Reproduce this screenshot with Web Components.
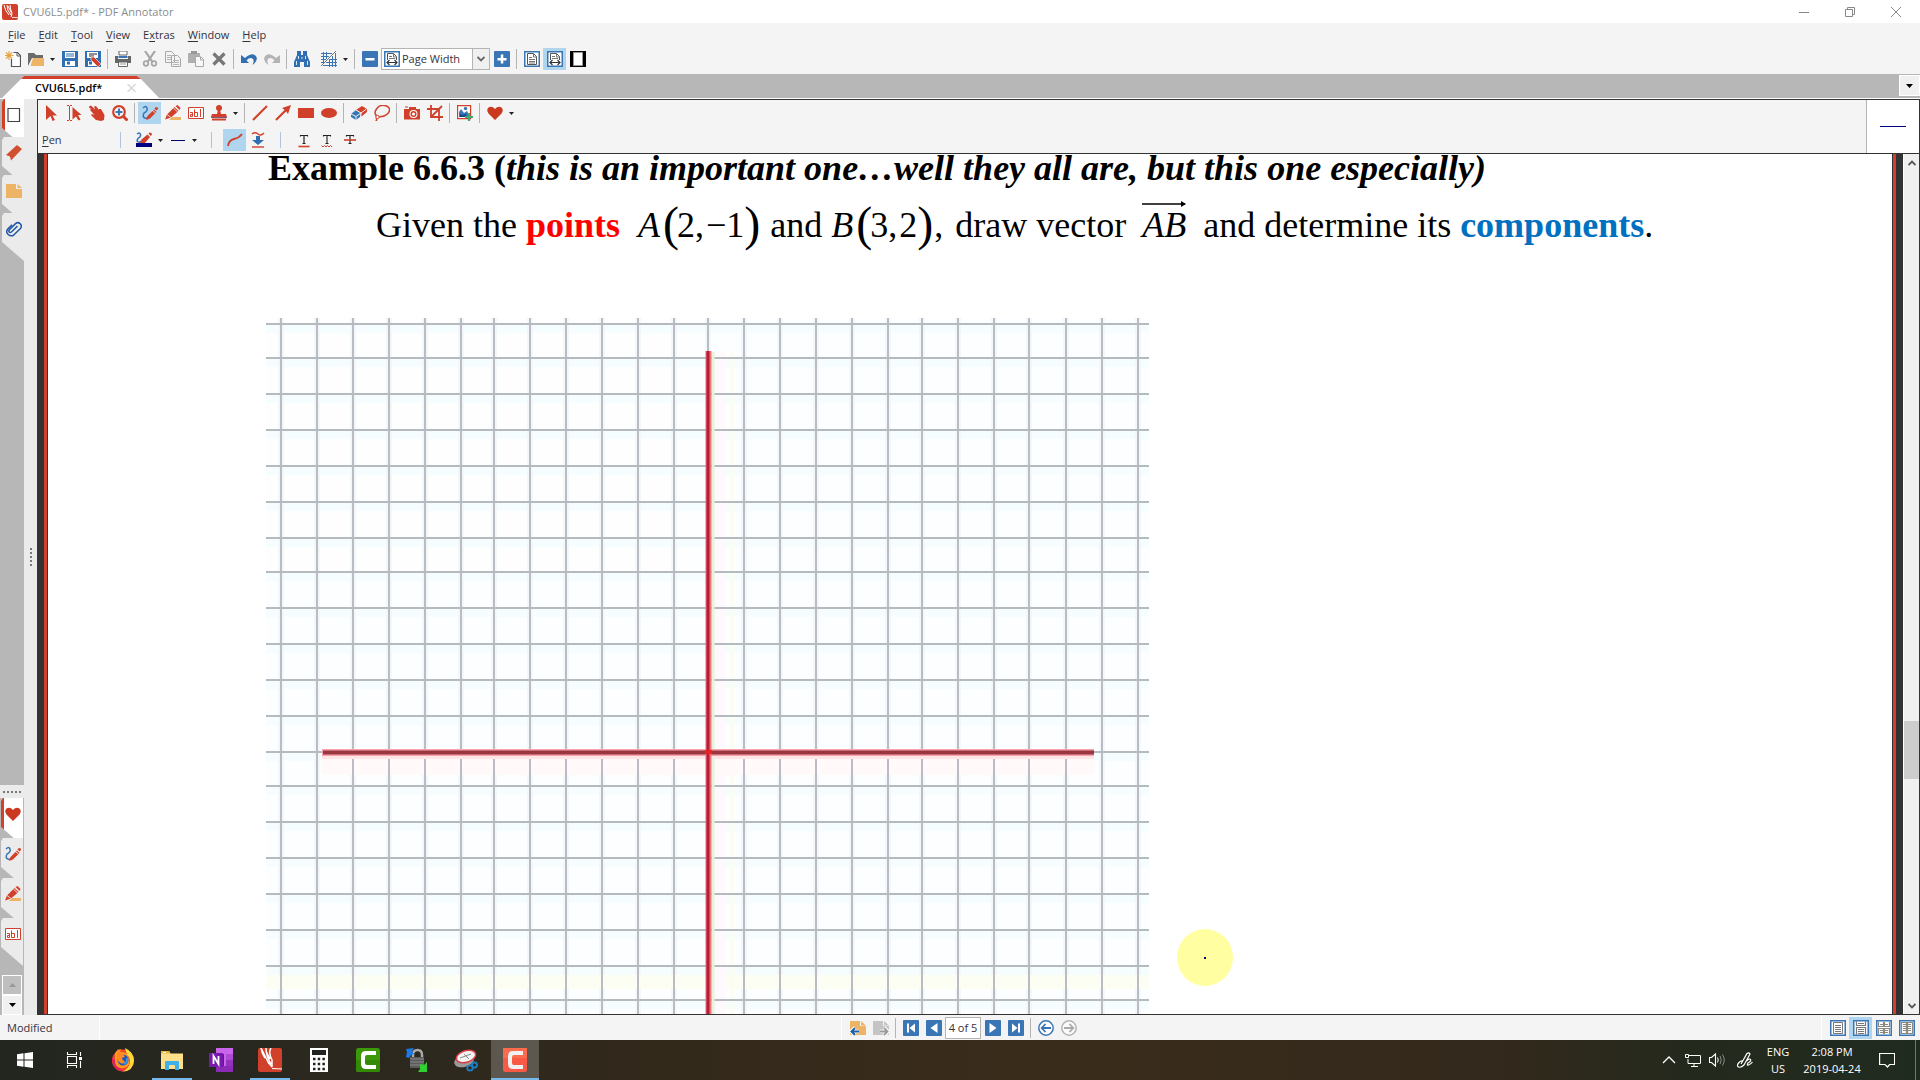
<!DOCTYPE html>
<html lang="en">
<head>
<meta charset="utf-8">
<title>CVU6L5.pdf* - PDF Annotator</title>
<style>
  html, body { margin: 0; height: 100%; }
  body {
    font: 11px/16px "Open Sans", "Noto Sans", sans-serif;
    color: #333340;
    overflow: hidden;
    --red: #d0402b;
    --blue: #3a76b6;
    --panel: #f4f4f4;
    --strip: #b7b7b7;
    --light: #ebebeb;
    --dark: #333333;
    --hot: #b0d5ef;
  }
</style>
</head>
<body>
<annotator-app></annotator-app>

<script>
const PEN = '<path d="M1 3q3-3 4 0t-3 5q-2 4 1 5 2 1 3-1" fill="none" stroke="#3a76b6" stroke-width="1.5"/><path d="M4 15l1.500-4L12 4.500l2.500 2.500L8 13.500z" fill="#d0402b"/><path d="M12.500 3.500l1.300-1.500 2 .500.200 1.500-1.500 1.500z" fill="#d0402b"/><path d="M10.500 5.500l3 2.500" stroke="#fff" stroke-width=".8"/>';
const PAGE = '<path d="M.75.75h14.500v14.500H.75z" fill="#fff" stroke="#3a76b6" stroke-width="1.500"/>';
const ICONS = {
  logo: '<rect width="16" height="16" rx="2" fill="#d0402b"/><path d="M2 1q1 6 5 10M5 1q0 6 4 10M6 2q2 4 4 8l-1 3M8 1q0 4 2 8" fill="none" stroke="#fff" stroke-width="1"/><path d="M10 13.500h6" stroke="#fff" stroke-width=".8"/>',
  newdoc: '<path d="M8.500 1.500h4l3 3v11h-9V8" fill="#fff" stroke="#555" stroke-width="1.200"/><path d="M12 1.500V5h3.500" fill="none" stroke="#555"/><path d="M4 0v9M0 4.500h8.500M1 1.500l6 6M7 1.500l-6 6" stroke="#e8a33c" stroke-width="1.100"/>',
  open: '<path d="M0 15V2h6l2 2h7v3H4z" fill="#6b6b6b"/><path d="M2.500 15L5 7h11v8z" fill="#ecb464"/>',
  save: '<path d="M0 0h16v16H0z" fill="#2f6fb2"/><path d="M3 1h10v6H3zM3 10h10v5H3z" fill="#fff"/><path d="M4 3h8M4 5h8" stroke="#2f6fb2"/><path d="M5 10.500h3v3H5z" fill="#2f6fb2"/>',
  saveas: '<path d="M0 0h16v16H0z" fill="#2f6fb2"/><path d="M2 1h11v6H2zM3 10h9v5H3z" fill="#fff"/><path d="M4 3h8M4 5h5" stroke="#222"/><path d="M4 10.500h3v3H4z" fill="#2f6fb2"/><path d="M6 6l3 0 7 7-3 3-7-7z" fill="#d0402b" stroke="#fff" stroke-width=".6"/>',
  print: '<path d="M4 0h8v4H4z" fill="#fff" stroke="#666"/><path d="M3.500 5h9v2h-9z" fill="#3a76b6"/><path d="M0 5h3v3h10V5h3v7H0z" fill="#666"/><path d="M3.500 11h9v4.500h-9z" fill="#fff" stroke="#666"/><path d="M5 13h6" stroke="#999"/>',
  cut: '<path d="M3 0l7.500 11M13 0L5.500 11" stroke="#a6a6a6" stroke-width="2.200"/><circle cx="4" cy="12.500" r="2.300" fill="none" stroke="#a6a6a6" stroke-width="1.700"/><circle cx="12" cy="12.500" r="2.300" fill="none" stroke="#a6a6a6" stroke-width="1.700"/>',
  copy: '<path d="M.5.5h6l3 3v8h-9zM6.500 4.500h6l3 3v8h-9z" fill="#f4f4f4" stroke="#a8a8a8"/><path d="M2 4.500h4M2 6.500h4M2 8.500h4M8 9.500h6M8 11.500h6M8 13.500h6" stroke="#b4b4b4"/>',
  paste: '<path d="M0 2h12v10H0z" fill="#b0b0b0"/><path d="M3 0h6v3H3z" fill="#999"/><path d="M7.500 5.500h5l3 3v7h-8z" fill="#f8f8f8" stroke="#a8a8a8"/><path d="M12.500 6v3h3" fill="none" stroke="#a8a8a8"/>',
  del: '<path d="M2.500 2.500l11 11M13.500 2.500l-11 11" stroke="#777" stroke-width="3.200"/>',
  undo: '<path d="M0 4v8h8L5.500 9.500Q9 5.500 12 8q1.500 2-.5 6Q17 10 15.500 6 12 0 4 7z" fill="#2f6fb2"/>',
  redo: '<path d="M16 4v8H8l2.500-2.500Q7 5.500 4 8q-1.500 2 .5 6Q-1 10 .5 6 4 0 12 7z" fill="#b4b4b4"/>',
  find: '<path d="M3 0h4v4h2V0h4v4l3 7v5h-6v-5H6v5H0v-5l3-7z" fill="#2f6fb2"/><path d="M4.500 5v3M2.500 10v4M11.500 5v3M13.500 10v4M8 6v2" stroke="#d6e6f5"/>',
  grid: '<path d="M0 2.500h11M0 5.500h8M0 8.500h5M8 8.500h8M0 11.500h3M5 11.500h11M2 14.500h14M2.500 1v10M5.500 1v7M8.500 8v8M11.500 5v11M14.500 2v14" stroke="#3a76b6" stroke-width="1"/><path d="M0 15L15 0" stroke="#777" stroke-width="1"/>',
  minus: '<rect width="16" height="16" rx="1" fill="#3a76b6"/><path d="M3.500 7h9v2.500h-9z" fill="#fff"/>',
  plus: '<rect width="16" height="16" rx="1" fill="#3a76b6"/><path d="M3.500 7h9v2.500h-9zM6.800 3.500h2.500v9H6.800z" fill="#fff"/>',
  pagefull: PAGE + '<path d="M3.500 2.500h6l3 3v8h-9z" fill="none" stroke="#555"/><path d="M9.500 3v3h3M5 6.500h3M5 8.500h6M5 10.500h6M5 12h6" stroke="#777" fill="none"/>',
  pagewidth: PAGE + '<path d="M3.500 9V2.500h6l3 3V9" fill="none" stroke="#555"/><path d="M5 5.500h3M5 7.500h6M9.500 3v3h3" stroke="#777" fill="none"/><path d="M3 11.500h10M5.500 9L3 11.500 5.500 14M10.500 9l2.500 2.500-2.500 2.500" fill="none" stroke="#333" stroke-width="1.200"/>',
  fullscreen: '<path d="M0 0h16v16H0z"/><path d="M3.500 1.500h9v13h-9z" fill="#fff" stroke="#999"/>',
  arrow: '<path d="M3 0l11 10.500H9.500l2.500 4.500-2.500 1L7.500 11 3 15z" fill="#d0402b"/>',
  textsel: '<path d="M1 .5h2M4 .5h2M3.500 1v14M1 15.500h2M4 15.500h2" stroke="#d0402b" stroke-width="1"/><path d="M6.500 2l9 8h-3.500l2.500 4.500-2 1L10 11.500 6.500 14.500z" fill="#d0402b"/>',
  hand: '<path d="M0 1.500l2-1 4 4-1-3 2-.5 3 4V4l2 0 3.500 6-.5 5-3 1-5-1-5-5 1-1 2.500 1L1 5l1-1-2-1.500z" fill="#d0402b"/>',
  zoom: '<circle cx="7" cy="7" r="5.800" fill="#fff" stroke="#d0402b" stroke-width="2.200"/><path d="M11 11l4.500 4.500" stroke="#d0402b" stroke-width="3"/><path d="M3.500 7h7M7 3.500v7" stroke="#3a76b6" stroke-width="2.200"/>',
  pen: PEN,
  marker: '<path d="M7 12h9v3H4z" fill="#ecb464"/><path d="M0 14.500l2-5L9.500 2l4 4L6 12.500z" fill="#d0402b"/><path d="M10.500 1l2-1 3 3-1 2z" fill="#d0402b"/><path d="M2 9.500l4 3M8.500 3l4 4" stroke="#fff" stroke-width=".8"/>',
  textbox: '<path d="M.5 2.500h15v11H.5z" fill="#fff" stroke="#d0402b"/><path d="M12.500 4v8M6.500 4.500v7M6.500 7.500h3v4h-3M2 7.500h2.500v4H2.500v-2h2" fill="none" stroke="#d0402b"/>',
  stamp: '<circle cx="8" cy="3" r="3" fill="#d0402b"/><path d="M7 5h2l1 4h5l1 3H0l1-3h5z" fill="#d0402b"/><path d="M0 12.500h16" stroke="#7e5a7a"/><path d="M1 14.500h14" stroke="#d0402b" stroke-width="2"/>',
  line: '<path d="M1 15L15 1" stroke="#d0402b" stroke-width="2"/>',
  arrowline: '<path d="M1 15L12 4" stroke="#d0402b" stroke-width="2.200"/><path d="M16 0l-3 9-2.500-3.500L7 3z" fill="#d0402b"/>',
  rect: '<path d="M0 3h16v10H0z" fill="#d0402b"/>',
  ellipse: '<ellipse cx="8" cy="8" rx="8" ry="5" fill="#d0402b"/>',
  eraser: '<path d="M0 9l5-4 5 3-1 4-4 3-5-3z" fill="#3a76b6"/><path d="M5 5l6-4 5 3v3l-6 5V8z" fill="#d0402b"/><path d="M0 9l5 2.500v4M5 11.500L15.500 4M5 5l5 3v4" stroke="#fff" fill="none" stroke-width=".9"/>',
  lasso: '<path d="M4 12Q-1 9 2.500 4T12 .8q5 2 3 6t-9 5q-4 0-3.500 2t-1 2.200" fill="none" stroke="#d0402b" stroke-width="1.500"/><circle cx="3.500" cy="12" r="1.700" fill="#fff" stroke="#d0402b"/>',
  camera: '<path d="M0 4h5V2h7v2h4v10.500H0z" fill="#d0402b"/><circle cx="9.500" cy="9" r="4" fill="#fff"/><circle cx="9.500" cy="9" r="2.300" fill="none" stroke="#d0402b" stroke-width="1.500"/><path d="M1 2h3" stroke="#d0402b"/>',
  crop: '<path d="M4 0v12h12M0 4h12v12M4.500 11.500L15 1" fill="none" stroke="#d0402b" stroke-width="1.800"/>',
  picture: '<path d="M.6.6h13v13H.6z" fill="#fff" stroke="#d0402b" stroke-width="1.200"/><circle cx="8.500" cy="3.500" r="1.700" fill="#3a76b6"/><path d="M2 7l2-3 3 4 3-2 2 4v2H2z" fill="#3a76b6"/><path d="M3 9l3 1 3-1 1 3H3z" fill="#174a85"/><path d="M12 8v8M8 12h8" stroke="#3fa77a" stroke-width="2.200"/>',
  heart: '<path d="M8 15L1.500 8.500Q-1 5 1.500 2.500 5 .5 8 4q3-3.500 6.500-1.500Q17 5 14.500 8.500z" fill="#c9381f"/>',
  pencolor: '<path d="M1 2q3-2 3.500.5T2 6.500q-2 3 .500 3.500 2 .500 3-1" fill="none" stroke="#3a76b6" stroke-width="1.500"/><path d="M4 11l1.500-3.500L11.500 2.500 14 5 9 11z" fill="#d0402b"/><path d="M12.500 1.500L13.500.500 15.500 1 16 2.500 14.700 4z" fill="#d0402b"/><path d="M0 11h16v4H0z" fill="#000080"/>',
  strokew: '<path d="M1 8.500h14" stroke="#000060"/>',
  curve: '<path d="M1 14q1-6 6-7t8-5" fill="none" stroke="#d0402b" stroke-width="1.800"/>',
  pressure: '<path d="M2 2q3-2.500 6 0t6-1" fill="none" stroke="#d0402b" stroke-width="1.300"/><path d="M6 4h4v4h4l-6 5-6-5h4z" fill="#2f6fb2"/><path d="M2 15h12" stroke="#d0402b" stroke-width="1.400"/>',
  tunder: '<path d="M4.500 4.500v-1h7v1M8 3.500v8M6.500 11.500h3" fill="none" stroke="#222" stroke-width="1.200"/><path d="M2.500 14.500h11" stroke="#d0402b" stroke-width="1.600"/>',
  twave: '<path d="M4.500 4.500v-1h7v1M8 3.500v8M6.500 11.500h3" fill="none" stroke="#222" stroke-width="1.100"/><path d="M2.500 13.500l1.500 1.500 1.500-1.500L7 15l1.500-1.500L10 15l1.500-1.500L13 15" fill="none" stroke="#d0402b"/>',
  tstrike: '<path d="M4.500 4.500v-1h7v1M8 3.500v8M6.500 11.500h3" fill="none" stroke="#222" stroke-width="1.200"/><path d="M2 8h12" stroke="#d0402b" stroke-width="1.600"/>',
  square: '<path d="M2 1.500h11.500v13H2z" fill="#fff" stroke="#444" stroke-width="1.200"/>',
  bookmark: '<path d="M0 10L11 0l5 4L5 15.500l-1-4z" fill="#d0502f"/>',
  note: '<path d="M0 1h10v5h6v9H0z" fill="#ecb464"/><path d="M11.500 1L16 5h-4.500z" fill="#ecb464"/>',
  clip: '<path d="M11.500 5L5.500 11q-1.500 1-2.300 0t.2-2.300L9.500 2.600q2.500-2 4.700.2t.2 4.700L8 13.800q-3 2.200-5.800-.3T1.800 8L6 3.800" fill="none" stroke="#1f56a5" stroke-width="1.500"/>',
  prevview: '<path d="M0 1h10v5h6v9H0z" fill="#ecb464"/><path d="M11 1l5 4.500h-5z" fill="#ecb464"/><path d="M1 11.500h8M5 7.500l-4 4 4 4" stroke="#fff" stroke-width="3.500" fill="none"/><path d="M1 11.500h8M5 8l-3.500 3.500L5 15" stroke="#1f5fa8" stroke-width="2" fill="none"/>',
  nextview: '<path d="M0 1h10v5h6v9H0z" fill="#c4c4c4"/><path d="M11 1l5 4.500h-5z" fill="#c4c4c4"/><path d="M7 11.500h8M11 7.500l4 4-4 4" stroke="#fff" stroke-width="3.500" fill="none"/><path d="M7 11.500h8M11 8l3.500 3.500L11 15" stroke="#999" stroke-width="1.800" fill="none"/>',
  first: '<rect width="16" height="16" rx="1" fill="#3a76b6"/><path d="M4 3.500h2v9H4zM12 3.500v9L6.500 8z" fill="#fff"/>',
  prev: '<rect width="16" height="16" rx="1" fill="#3a76b6"/><path d="M11.500 3v10L4.500 8z" fill="#fff"/>',
  next: '<rect width="16" height="16" rx="1" fill="#3a76b6"/><path d="M4.500 3v10l7-5z" fill="#fff"/>',
  last: '<rect width="16" height="16" rx="1" fill="#3a76b6"/><path d="M10 3.500h2v9h-2zM4 3.500v9L9.500 8z" fill="#fff"/>',
  back: '<circle cx="8" cy="8" r="7.200" fill="#fff" stroke="#3a76b6" stroke-width="1.500"/><path d="M4 8h9M7.500 4L3.700 8l3.800 4" fill="none" stroke="#3a76b6" stroke-width="1.800"/>',
  forward: '<circle cx="8" cy="8" r="7.200" fill="#fafafa" stroke="#b4b4b4" stroke-width="1.500"/><path d="M3 8h9M8.500 4l3.800 4-3.800 4" fill="none" stroke="#aaa" stroke-width="1.800"/>',
  view1: PAGE + '<path d="M3.500 2.500h9v11h-9z" fill="none" stroke="#777"/><path d="M5 5.500h6M5 7.500h6M5 9.500h6M5 11.500h6" stroke="#777"/>',
  view2: PAGE + '<path d="M3.500 1.500v4h9v-4M3.500 14.500v-7h9v7" fill="none" stroke="#777" stroke-width="1.200"/><path d="M5 3.500h6M5 9.500h6M5 11.500h6M5 13.500h6" stroke="#777"/>',
  view3: PAGE + '<path d="M2.500 2v4.500h5V2M8.500 2v4.500h5V2M2.500 14V8.500h5V14M8.500 14V8.500h5V14M4 4.500h8M4 10.500h8M4 12.500h8" fill="none" stroke="#8a8a80" stroke-width="1.200"/>',
  view4: PAGE + '<path d="M2.500 2.500h5v11h-5zM8.500 2.500h5v11h-5zM4 4.500h8M4 6.500h8M4 8.500h8M4 10.500h8" fill="none" stroke="#8a8a80" stroke-width="1.200"/>',
  min: '<path d="M3 8.500h10" stroke="#888"/>',
  restore: '<path d="M3.500 5.500h7v7h-7zM5.500 5V3.500h7v7H11" fill="none" stroke="#888"/>',
  close: '<path d="M3 3l10 10M13 3L3 13" stroke="#888"/>',
  start: '<path d="M0 2.300l6.500-1v6.200H0zM7.500 1.200L16 0v7.500H7.500zM0 8.500h6.500v6.200l-6.500-1zM7.500 8.500H16V16l-8.500-1.200z" fill="#fff"/>',
  taskview: '<path d="M1.500 0v2.500h9V0M1.500 16v-2.500h9V16M1.500 4.500h9v7h-9zM14.500 0v4M14.500 9v7" fill="none" stroke="#fff" stroke-width="1.100"/><path d="M13 5h3v3h-3z" fill="#fff"/>',
  firefox: '<circle cx="12" cy="12.500" r="11" fill="#f5452d"/><path d="M1 10q1 13 12 13.500Q4 19 4 12z" fill="#e01b6a"/><path d="M14 0q9 4 9 13-1 10-11 10.500Q20 19 19 12q0-3-3-5z" fill="#ffd83b"/><path d="M4 6q1-4 6-5l-1 3q7-1 9 7t-6 9-8-8z" fill="#ff9a1f"/><circle cx="12" cy="12" r="5.500" fill="#2554b8"/><path d="M6 5Q5 3 7 1q1 3 5 5l2 3q-3 0-3 2l3 3q-2 3-6 0-3-3-2-9z" fill="#ff8a1f"/><path d="M16 10q1 4-3 6" stroke="#2d9ce8" stroke-width="2" fill="none"/>',
  explorer: '<path d="M1 3h8l1.500 2.500H23V21H1z" fill="#ffe08a"/><path d="M1 3h8l1.500 2.500H1z" fill="#e6b647"/><path d="M3 4h3v1H3z" fill="#fff"/><path d="M5 22v-8q0-1 1-1h12q1 0 1 1v8h-4v-4q0-1-1-1h-4q-1 0-1 1v4z" fill="#3fb1ea"/>',
  onenote: '<path d="M7 0h17v24H7z" fill="#ca64ea"/><path d="M17 6h7v6h-7z" fill="#ae4bd5"/><path d="M17 12h7v6h-7z" fill="#9332bf"/><path d="M7 18h17v6H7z" fill="#8a2ab5"/><path d="M7 6h8v12H7z" fill="#5f1791"/><path d="M0 5h14v14H0z" fill="#7719aa"/><path d="M4.500 16V8l5 8V8" fill="none" stroke="#fff" stroke-width="1.800"/>',
  pdfapp: '<rect width="24" height="24" rx="2" fill="#d0402b"/><path d="M3 0q1 6 4 10M3 0l8 16M8 0q0 8 5 16M8 3l4 8M13 0q-3 4 1 12l0 7M14 19l-3-4" fill="none" stroke="#fff" stroke-width="1.500"/><path d="M14 20.500l10 .5" stroke="#fff"/>',
  calc: '<path d="M3 0h18v25H3z" fill="#fff"/><path d="M5 2h14v5H5z" fill="#22241f"/><path d="M6 11h12M6 16h12M6 21h12" stroke="#22241f" stroke-width="2.500" stroke-dasharray="2.500 2.200"/>',
  camgreen: '<rect width="24" height="24" rx="2.500" fill="#3c9a0a"/><path d="M0 12h24v10q0 2-2 2H2q-2 0-2-2z" fill="#348a06"/><path d="M20 3H10Q5 3 5 8v8q0 5 5 5h10v-4h-9q-2 0-2-2V9q0-2 2-2h9z" fill="#fff"/>',
  camred: '<rect width="24" height="24" rx="2.500" fill="#f95a48"/><path d="M0 0h24v10H0z" fill="#fb6b4d"/><path d="M20 3H10Q5 3 5 8v8q0 5 5 5h10v-4h-9q-2 0-2-2V9q0-2 2-2h9z" fill="#f1f1f1"/>',
  lock: '<path d="M8 10V7q0-5 4.500-5T17 7v3" fill="none" stroke="#aaa" stroke-width="2.500"/><path d="M5 9h14v11H5z" fill="#5a5a5a"/><path d="M5 11h14M5 14h14M5 17h14" stroke="#8a8a8a"/><path d="M1 1l8-1-2 3 2 3-3 1-2 3-3-1 1-5z" fill="#1b7ce8"/><path d="M15 16l4 1 3-3v10h-9l2-3z" fill="#2fd02f"/>',
  snip: '<ellipse cx="10" cy="13" rx="10" ry="6" transform="rotate(-15 10 13)" fill="#9a9a9a"/><ellipse cx="12" cy="8.500" rx="10" ry="5.800" transform="rotate(-18 12 8.500)" fill="#f4f4f4" stroke="#d8404a" stroke-width="1.500"/><path d="M6 10l11-4M10 6l5 5" stroke="#888"/><circle cx="16" cy="20" r="2.700" fill="none" stroke="#1c7fc4" stroke-width="1.800"/><circle cx="20.500" cy="17" r="2.500" fill="none" stroke="#1c7fc4" stroke-width="1.800"/>',
  up: '<path d="M2 11l6-6 6 6" fill="none" stroke="#fff" stroke-width="1.300"/>',
  network: '<path d="M4 3.500h11.500v8H3V7M9 11.500V14M6 14.500h7" fill="none" stroke="#fff"/><path d="M.5 2.500h3v3h-3z" fill="none" stroke="#fff"/>',
  speaker: '<path d="M.5 5.500h2l4-3.500v12l-4-3.500h-2z" fill="none" stroke="#fff" stroke-width="1.100"/><path d="M8.500 5.500q1.500 2.500 0 5" fill="none" stroke="#fff"/><path d="M11 4q2.500 4 0 8M13.500 2.500q3.500 5.500 0 11" fill="none" stroke="#8a8e88"/>',
  ink: '<path d="M4 12L10 1.500q2-1.500 3 .5L7 13q-3 3-5.500 2T2 10.500q2-2 4-1.500M9.500 9q3-3 4-1.500T11 11q-1.500 2.500.5 2T15.500 10" fill="none" stroke="#fff" stroke-width="1.200"/>',
  notice: '<path d="M.6 1.500h15v11h-5L8.500 15 6 12.500H.6z" fill="none" stroke="#fff" stroke-width="1.200"/>'
};

const svg = (name, size = 16) => {
  const box = size > 16 ? 24 : 16;
  return `<svg viewBox="0 0 ${box} ${box}" width="${size}" height="${size}" aria-hidden="true">${ICONS[name]}</svg>`;
};

const define = (tag, render) => customElements.define(tag, class extends HTMLElement {
  constructor() { super(); this.attachShadow({ mode: 'open' }); }
  connectedCallback() {
    if (!this.shadowRoot.childNodes.length) this.shadowRoot.innerHTML = render(this);
  }
});

const RESET = `
  button { font: inherit; color: inherit; background: none; border: 0; padding: 0; margin: 0; }
  svg { display: block; flex: none; }
`;

define('tool-button', el => `
  <style>${RESET}
    :host { display: block; flex: none; }
    button { display: flex; align-items: center; justify-content: center; width: 23px; height: 22px; }
    :host([active]) button { background: var(--hot); }
  </style>
  <button aria-label="${el.getAttribute('label')}">${svg(el.getAttribute('icon'))}</button>`);

define('drop-arrow', () => `
  <style>${RESET}
    :host { display: block; flex: none; }
    button { display: flex; align-items: center; justify-content: center; width: 11px; height: 22px; }
  </style>
  <button aria-label="More options"><svg width="5" height="3" viewBox="0 0 5 3"><path d="M0 0h5L2.500 3z" fill="#222"/></svg></button>`);

define('tool-sep', () => `
  <style>
    :host { display: flex; justify-content: center; flex: none; width: 7px; height: 20px; }
    i { width: 1px; background: var(--sep, #b4b4b4); }
  </style><i></i>`);

define('title-bar', () => `
  <style>${RESET}
    :host { display: flex; align-items: center; height: 23px; background: #fff; color: #8c8c8c; padding: 0 1px 0 2px; }
    h1 { flex: 1; font: inherit; margin: 0 0 0 5px; }
    button { width: 46px; height: 20px; display: flex; align-items: center; justify-content: center; }
  </style>
  ${svg('logo')}<h1><slot></slot></h1>
  <button aria-label="Minimize">${svg('min')}</button>
  <button aria-label="Restore">${svg('restore')}</button>
  <button aria-label="Close">${svg('close')}</button>`);

define('menu-bar', () => `
  <style>${RESET}
    :host { display: block; background: var(--panel); }
    nav { display: flex; align-items: center; height: 24px; gap: 13px; padding-left: 8px; }
    u { text-underline-offset: 2px; }
  </style>
  <nav>${['File', 'Edit', 'Tool', 'View', 'Extras', 'Window', 'Help'].map(t => {
    const k = t === 'Extras' ? 1 : 0;
    return `<button>${t.slice(0, k)}<u>${t[k]}</u>${t.slice(k + 1)}</button>`;
  }).join('')}</nav>`);

define('zoom-select', () => `
  <style>${RESET}
    :host { display: block; flex: none; }
    label { display: flex; align-items: center; box-sizing: border-box; width: 109px; height: 22px; border: 1px solid #b4b4b4; background: #fff; padding-left: 2px; }
    select { appearance: none; flex: 1; min-width: 0; border: 0; background: none; font: inherit; color: inherit; padding: 0 0 0 2px; height: 20px; outline: 0; }
    span { display: flex; align-items: center; justify-content: center; width: 16px; height: 20px; border-left: 1px solid #b4b4b4; background: #f0f0f0; }
  </style>
  <label>${svg('pagewidth')}<select aria-label="Zoom"><option>Page Width</option><option>Full Page</option></select>
  <span><svg width="8" height="6" viewBox="0 0 8 6"><path d="M.5 1L4 4.500 7.500 1" fill="none" stroke="#666" stroke-width="1.800"/></svg></span></label>`);

const tools = list => list.map(t =>
  t === '|' ? '<tool-sep></tool-sep>' :
  t === 'v' ? '<drop-arrow></drop-arrow>' :
  t === ' ' ? '<span class="gap"></span>' :
  t === 'zoom-select' ? '<zoom-select></zoom-select>' :
  `<tool-button icon="${t.replace('*', '')}" label="${t.replace('*', '')}"${t.endsWith('*') ? ' active' : ''}></tool-button>`).join('');

define('main-toolbar', () => `
  <style>
    :host { display: flex; align-items: center; box-sizing: border-box; height: 27px; padding: 0 0 3px 1px; background: var(--panel); }
    .gap { width: 4px; }
  </style>
  ${tools(['newdoc', 'open', 'v', 'save', 'saveas', '|', 'print', ' ', 'cut', 'copy', 'paste', 'del', '|', 'undo', 'redo', '|', 'find', ' ', 'grid', 'v', '|', 'minus', 'zoom-select', 'plus', '|', 'pagefull', 'pagewidth*', 'fullscreen'])}`);

define('tab-strip', () => `
  <style>${RESET}
    :host { display: flex; justify-content: space-between; height: 24px; background: var(--strip); border-bottom: 1px solid #fff; }
    .tab { display: flex; align-items: center; box-sizing: border-box; width: 157px; height: 22px; margin: 2px 0 0 2px; padding: 0 23px 2px 33px; justify-content: space-between;
      background: #fff; border-top: 3px solid var(--red); color: #000; font-weight: 600;
      clip-path: polygon(0 100%, 19px 3px, 22px 0, calc(100% - 22px) 0, calc(100% - 18px) 3px, 100% 100%); }
    .more { width: 21px; height: 21px; margin-top: 1px; box-sizing: border-box; background: #f0f0f0; border: 1px solid #fff; display: flex; align-items: center; justify-content: center; }
  </style>
  <div class="tab"><slot></slot><button aria-label="Close tab"><svg width="9" height="8" viewBox="0 0 9 8"><path d="M.5 0l8 8M8.500 0l-8 8" stroke="#d8d8d8" stroke-width="1.500"/></svg></button></div>
  <button class="more" aria-label="Open documents"><svg width="7" height="4" viewBox="0 0 7 4"><path d="M0 0h7L3.500 4z"/></svg></button>`);

define('side-tab', el => `
  <style>${RESET}
    :host { display: block; margin-bottom: -10px; position: relative; }
    button { display: flex; box-sizing: border-box; width: 22px; height: 48px; padding: 8px 0 0 4px; background: var(--light);
      clip-path: polygon(2px 0, 100% 0, 100% 100%, 0 29px, 0 3px); border-left: 0 solid var(--red); }
    :host([active]) button { background: #fff; border-left-width: 3px; padding-left: 1px; }
  </style>
  <button aria-label="${el.getAttribute('icon')}">${svg(el.getAttribute('icon'))}</button>`);

define('side-bar', () => `
  <style>${RESET}
    :host { display: flex; width: 37px; background: var(--light); }
    .rail { display: flex; flex-direction: column; width: 24px; background: var(--strip); }
    .group { display: flex; flex-direction: column; padding-left: 2px; }
    .low { padding-left: 1px; }
    .low side-tab { margin-bottom: -8px; }
    .grip { display: flex; gap: 2px; align-items: center; justify-content: center; height: 13px; margin-top: auto; background: var(--light); }
    i { width: 2px; height: 2px; background: #777; }
    .step { display: flex; flex-direction: column; margin: 17px 0 0 2px; width: 20px; }
    .step button { display: flex; align-items: center; justify-content: center; box-sizing: border-box; height: 20px; border: 1px solid #fff; background: #f0f0f0; }
    .step button:first-child { background: #bfbfbf; }
    .split { flex: 1; display: flex; flex-direction: column; align-items: center; justify-content: center; gap: 2px; }
  </style>
  <div class="rail">
    <div class="group"><side-tab icon="square" active></side-tab><side-tab icon="bookmark"></side-tab><side-tab icon="note"></side-tab><side-tab icon="clip"></side-tab></div>
    <div class="grip"><i></i><i></i><i></i><i></i><i></i></div>
    <div class="group low"><side-tab icon="heart" active></side-tab><side-tab icon="pen"></side-tab><side-tab icon="marker"></side-tab><side-tab icon="textbox"></side-tab></div>
    <div class="step">
      <button aria-label="Scroll up"><svg width="7" height="4" viewBox="0 0 7 4"><path d="M0 4h7L3.500 0z" fill="#999"/></svg></button>
      <button aria-label="Scroll down"><svg width="7" height="4" viewBox="0 0 7 4"><path d="M0 0h7L3.500 4z"/></svg></button>
    </div>
  </div>
  <div class="split"><i></i><i></i><i></i><i></i><i></i></div>`);

define('annotation-toolbar', () => `
  <style>
    :host { display: flex; border: 1px solid var(--dark); background: var(--panel); height: 53px; }
    .rows { flex: 1; display: flex; flex-direction: column; gap: 5px; padding: 2px 0 0 1px; }
    .row { display: flex; align-items: center; }
    .props { --sep: #b4c2d8; }
    .props tool-sep { margin: 0 8px; height: 16px; }
    .name { width: 67px; padding-left: 3px; }
    u { text-underline-offset: 2px; }
    .preview { display: flex; align-items: center; justify-content: center; width: 52px; background: #fff; border-left: 1px solid #b4b4b4; }
    .preview i { width: 26px; height: 1px; background: #000080; }
  </style>
  <div class="rows">
    <div class="row">${tools(['arrow', 'textsel', 'hand', 'zoom', '|', 'pen*', 'marker', 'textbox', 'stamp', 'v', '|', 'line', 'arrowline', 'rect', 'ellipse', '|', 'eraser', 'lasso', '|', 'camera', 'crop', '|', 'picture', '|', 'heart', 'v'])}</div>
    <div class="row props"><span class="name"><u>P</u>en</span>${tools(['|', 'pencolor', 'v', 'strokew', 'v', '|', 'curve*', 'pressure', '|', 'tunder', 'twave', 'tstrike'])}</div>
  </div>
  <div class="preview"><i></i></div>`);

define('graph-paper', () => {
  const xs = [281, 317, 353, 389, 425, 461, 494, 530, 566, 602, 638, 674, 708, 744, 780, 816, 852, 888, 922, 958, 994, 1029, 1066, 1102, 1138];
  const ys = [324, 358, 394, 430, 466, 502, 538, 572, 608, 644, 680, 716, 752, 786, 822, 858, 894, 930, 966, 1000];
  const v = xs.map(x => `M${x - 266} 0v700`).join('');
  const h = ys.map(y => `M0 ${y - 318}h883`).join('');
  return `
  <style>:host { display: block; } svg { display: block; }</style>
  <svg width="883" height="700" viewBox="0 0 883 700" role="img" aria-label="Coordinate grid">
    <path d="M0 0h883v700H0z" fill="#fefeff"/>
    <path d="M428 0h455v700H428zM0 254h428v446H0z" fill="#fcfeff"/>
    <path d="${ys.map(y => `M0 ${y - 313}h883`).join('')}" stroke="#f5fdfe" stroke-width="8"/>
    <path d="${v}" stroke="#f2f8fa" stroke-width="6"/>
    <path d="M0 664h883" stroke="#fcfdf3" stroke-width="14"/>
    <path d="M452 34v666" stroke="#fff8fd" stroke-width="14"/>
    <path d="M466 34v666" stroke="#fdfdee" stroke-width="3"/>
    <path d="M56 448h772" stroke="#fff9f9" stroke-width="18"/>
    <path d="${v}" stroke="#bbbcc3" stroke-width="2"/>
    <path d="${h}" stroke="#b4babd" stroke-width="2"/>
    <path d="M447 34v666" stroke="#e2f5da" stroke-width="3"/>
    <path d="M56 439h772" stroke="#ffe6e6" stroke-width="4"/>
    <path d="M56 434.500h772" stroke="#f7a5aa" stroke-width="7"/>
    <path d="M57 434.500h771" stroke="#9a3542" stroke-width="4"/>
    <path d="M442.500 33v667" stroke="#f4737f" stroke-width="6"/>
    <path d="M442 33v667" stroke="#b21f38" stroke-width="3"/>
    <path d="M439 434h7" stroke="#f02020" stroke-width="4"/>
  </svg>`;
});

define('pdf-page', () => `
  <style>
    :host { display: block; position: relative; overflow: hidden; background: #fff; color: #000; font: 36px/40px "Liberation Serif", "Times New Roman", serif; padding: 0 0 0 218px; white-space: nowrap; }
    h2 { font: inherit; font-weight: bold; margin: -6px 0 0 2px; }
    p { margin: 13px 0 0 110px; display: flex; align-items: baseline; white-space: pre; }
    p > * { flex: none; }
    .red { color: #f00; } .blue { color: #0070c0; }
    .m { display: flex; align-items: baseline; margin-right: 3px; }
    .m i { margin-right: 3px; }
    .par { font-size: 48px; line-height: 40px; width: 14px; margin: 0 0 -3px; position: relative; top: 3px; }
    .neg { margin-left: 2px; }
    .vec { position: relative; margin: 0 17px 0 16px; }
    .vec svg { position: absolute; left: 0; top: -4px; width: 100%; height: 6px; }
    graph-paper { margin-top: 73px; }
    .spot { position: absolute; left: 1129px; top: 775px; width: 56px; height: 57px; border-radius: 50%; background: #ffffa2; display: flex; align-items: center; justify-content: center; }
    .spot::after { content: ""; width: 2px; height: 2px; background: #000060; }
  </style>
  <h2>Example 6.6.3 (<i>this is an important one…well they all are, but this one especially)</i></h2>
  <p><span>Given the <b class="red">points</b>  </span><span class="m"><i>A</i><span class="par">(</span>2,<span class="neg">−1</span><span class="par">)</span></span><span> and </span><span class="m"><i>B</i><span class="par">(</span>3,<span class="neg">2</span><span class="par">)</span></span><span class="m">,</span><span> draw vector</span><span class="vec"><i>AB</i><svg viewBox="0 0 44 6" preserveAspectRatio="none"><path d="M0 3h43" stroke="#000" stroke-width="1.500"/><path d="M39 0l5 3-5 3z"/></svg></span><span>and determine its <b class="blue">components</b>.</span></p>
  <graph-paper></graph-paper>
  <div class="spot"></div>`);

define('document-view', () => `
  <style>${RESET}
    :host { display: flex; flex: 1; min-height: 0; background: var(--dark); border-bottom: 1px solid var(--dark); }
    .frame { flex: 1; min-width: 0; margin: 0 7px; border: solid var(--red); border-width: 0 3px; display: flex; }
    pdf-page { flex: 1; min-width: 0; margin: 0 1px; }
    .bar { width: 16px; margin-right: 1px; background: #f0f0f0; border-left: 1px solid #fff; box-sizing: border-box; display: flex; flex-direction: column; align-items: center; justify-content: space-between; }
    .bar button { height: 17px; width: 15px; display: flex; align-items: center; justify-content: center; }
    .track { flex: 1; align-self: stretch; display: flex; flex-direction: column; }
    .before { flex: 550; } .thumb { flex: 58; background: #cdcdcd; } .after { flex: 218; }
  </style>
  <div class="frame"><pdf-page></pdf-page></div>
  <div class="bar">
    <button aria-label="Scroll up"><svg width="8" height="6" viewBox="0 0 8 6"><path d="M.5 5L4 1.500 7.500 5" fill="none" stroke="#555" stroke-width="1.800"/></svg></button>
    <div class="track"><div class="before"></div><div class="thumb"></div><div class="after"></div></div>
    <button aria-label="Scroll down"><svg width="8" height="6" viewBox="0 0 8 6"><path d="M.5 1L4 4.500 7.500 1" fill="none" stroke="#555" stroke-width="1.800"/></svg></button>
  </div>`);

define('status-bar', () => `
  <style>
    :host { display: flex; justify-content: space-between; align-items: center; height: 25px; background: var(--panel); padding-right: 2px; }
    .state { box-sizing: border-box; width: 100px; padding-left: 7px; border-right: 1px solid #fff; line-height: 23px; }
    .nav, .views { display: flex; align-items: center; border-left: 1px solid #fff; padding-left: 4px; }
    input { box-sizing: border-box; width: 36px; height: 22px; border: 1px solid #b4b4b4; padding: 0; text-align: center; font: inherit; color: inherit; background: #fff; }
  </style>
  <div class="state">Modified</div>
  <div class="nav">${tools(['prevview', 'nextview', '|', 'first', 'prev'])}<input aria-label="Page" value="4 of 5">${tools(['next', 'last', '|', 'back', 'forward'])}</div>
  <div class="views">${tools(['view1', 'view2*', 'view3', 'view4'])}</div>`);

define('task-button', el => `
  <style>${RESET}
    :host { display: block; }
    button { position: relative; display: flex; align-items: center; justify-content: center; width: 48px; height: 40px; }
    :host([active]) button { background: #5c5850; }
    :host([running]) button::after { content: ""; position: absolute; left: 4px; right: 4px; bottom: 0; height: 2px; background: #76b9ed; }
    :host([active]) button::after { left: 0; right: 0; }
  </style>
  <button aria-label="${el.getAttribute('icon')}">${svg(el.getAttribute('icon'), +el.getAttribute('size') || 24)}</button>`);

define('task-bar', () => `
  <style>${RESET}
    :host { display: flex; justify-content: space-between; height: 40px; color: #fff; background: linear-gradient(90deg, #22261f 0, #2b281f 18%, #33291b 35%, #3a2c1b 55%, #33291c 78%, #24291d 88%, #202b20 100%); }
    .apps { display: flex; gap: 1px; padding-left: 1px; }
    .tray { display: flex; align-items: center; }
    .tray > button { display: flex; align-items: center; justify-content: center; width: 24px; height: 40px; }
    .tray > .ink { width: 32px; }
    .txt { text-align: center; line-height: 17px; }
    .lang { width: 34px; } .clock { width: 74px; }
    .tray > .notice { width: 36px; }
    .desk { width: 4px; height: 40px; margin-left: 10px; border-left: 1px solid #73776f; }
  </style>
  <div class="apps">
    <task-button icon="start" size="16"></task-button><task-button icon="taskview" size="16"></task-button>
    <task-button icon="firefox"></task-button><task-button icon="explorer" running></task-button><task-button icon="onenote"></task-button>
    <task-button icon="pdfapp" running></task-button><task-button icon="calc"></task-button><task-button icon="camgreen"></task-button>
    <task-button icon="lock"></task-button><task-button icon="snip"></task-button><task-button icon="camred" running active></task-button>
  </div>
  <div class="tray">
    <button aria-label="Hidden icons">${svg('up')}</button><button aria-label="Network">${svg('network')}</button><button aria-label="Volume">${svg('speaker')}</button><button class="ink" aria-label="Ink">${svg('ink')}</button>
    <div class="txt lang">ENG<br>US</div><div class="txt clock">2:08 PM<br>2019-04-24</div>
    <button class="notice" aria-label="Notifications">${svg('notice')}</button><div class="desk"></div>
  </div>`);

define('annotator-app', () => `
  <style>
    :host { display: flex; flex-direction: column; height: 100vh; }
    main { flex: 1; display: flex; min-height: 0; }
    .work { flex: 1; min-width: 0; display: flex; flex-direction: column; }
  </style>
  <title-bar>CVU6L5.pdf* - PDF Annotator</title-bar>
  <menu-bar></menu-bar>
  <main-toolbar></main-toolbar>
  <tab-strip>CVU6L5.pdf*</tab-strip>
  <main>
    <side-bar></side-bar>
    <div class="work"><annotation-toolbar></annotation-toolbar><document-view></document-view></div>
  </main>
  <status-bar></status-bar>
  <task-bar></task-bar>`);
</script>
</body>
</html>
